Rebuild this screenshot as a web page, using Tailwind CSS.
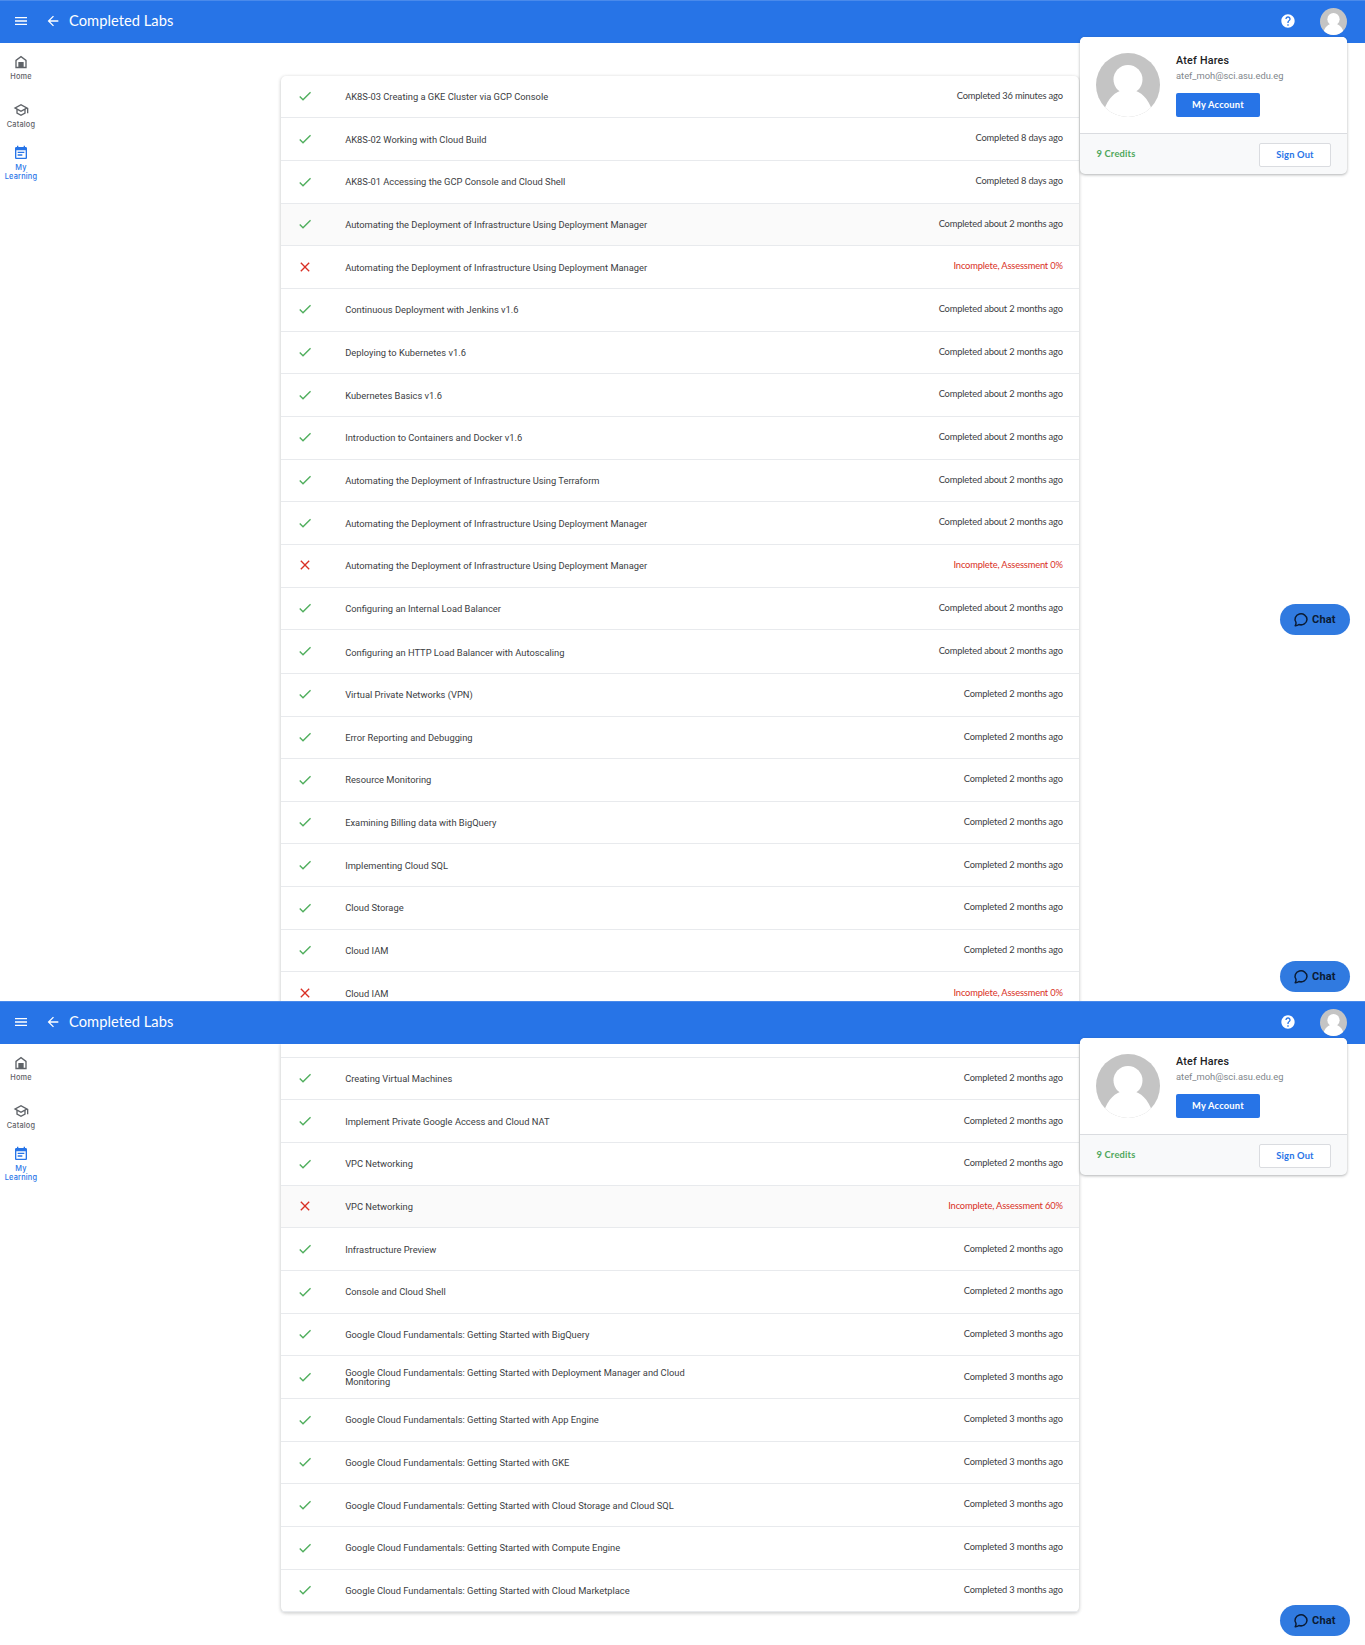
<!DOCTYPE html>
<html lang="en">
<head>
<meta charset="utf-8">
<title>Completed Labs</title>
<script src="https://cdn.jsdelivr.net/npm/@tailwindcss/browser@4"></script>
</head>
<body class="w-[1365px] bg-white font-['Roboto',sans-serif] text-[9.33px] text-[#3c4043]">
<svg class="hidden">
  <symbol id="menu" viewBox="0 0 24 24"><path d="M3 18h18v-2H3v2zm0-5h18v-2H3v2zm0-7v2h18V6H3z"/></symbol>
  <symbol id="back" viewBox="0 0 24 24"><path d="M20 11H7.83l5.59-5.59L12 4l-8 8 8 8 1.41-1.41L7.83 13H20v-2z"/></symbol>
  <symbol id="home" viewBox="0 0 24 24"><path fill-rule="evenodd" d="M12 2.6 3.5 9v12.2h17V9L12 2.6zm0 2.5 6.5 4.900v9.200H16V12H8v7.200H5.500V10L12 5.100z"/></symbol>
  <symbol id="school" viewBox="0 0 24 24"><path d="M12 3 1 9l4 2.180v6L12 21l7-3.820v-6l2-1.090V17h2V9L12 3zm6.820 6L12 12.720 5.180 9 12 5.280 18.820 9zM17 15.990l-5 2.730-5-2.730v-3.720L12 15l5-2.730v3.720z"/></symbol>
  <symbol id="event" viewBox="0 0 24 24"><path d="M19 3h-1V1h-2v2H8V1H6v2H5c-1.110 0-2 .9-2 2v14c0 1.100.9 2 2 2h14c1.100 0 2-.9 2-2V5c0-1.100-.9-2-2-2zm0 16H5V8h14v11zM17 10H7v2h10v-2zm-3 4H7v2h7v-2z"/></symbol>
  <symbol id="help" viewBox="0 0 24 24"><path d="M12 2C6.480 2 2 6.480 2 12s4.480 10 10 10 10-4.480 10-10S17.520 2 12 2zm1 17h-2v-2h2v2zm2.070-7.750-.9.920C13.450 12.900 13 13.500 13 15h-2v-.5c0-1.100.450-2.100 1.170-2.830l1.240-1.260c.370-.360.590-.860.590-1.410 0-1.100-.9-2-2-2s-2 .9-2 2H8c0-2.210 1.790-4 4-4s4 1.790 4 4c0 .880-.360 1.680-.930 2.250z"/></symbol>
  <symbol id="done" viewBox="0 0 24 24"><path d="M9 16.200 4.800 12l-1.400 1.400L9 19 21 7l-1.400-1.400L9 16.200z"/></symbol>
  <symbol id="close" viewBox="0 0 24 24"><path d="M19 6.410 17.590 5 12 10.590 6.410 5 5 6.410 10.590 12 5 17.590 6.410 19 12 13.410 17.590 19 19 17.590 13.410 12z"/></symbol>
  <symbol id="avatar" viewBox="0 0 64 64"><rect width="64" height="64" fill="#c4c4c4"/><circle cx="32" cy="26.500" r="14.500" fill="#fff"/><path fill="#fff" d="M6 64C10 48 16 41 25 37.500h14C48 41 54 48 58 64z"/></symbol>
  <symbol id="chat" viewBox="0 0 16 16"><path d="M3 10.400A6 5.500 0 1 1 5.900 12.500Q4.300 13.800 2.200 13.700 3.300 12.400 3 10.400z" fill="none" stroke="currentColor" stroke-width="1.500" stroke-linejoin="round"/></symbol>
</svg>

<div id="app"></div>

<script>
const ADM = 'Automating the Deployment of Infrastructure Using Deployment Manager';
const GCF = 'Google Cloud Fundamentals: Getting Started with ';
const AB = 'Completed about 2 months ago', M2 = 'Completed 2 months ago', M3 = 'Completed 3 months ago', IN = 'Incomplete, Assessment ';
const first = [
  ['AK8S-03 Creating a GKE Cluster via GCP Console', 'Completed 36 minutes ago'],
  ['AK8S-02 Working with Cloud Build', 'Completed 8 days ago'],
  ['AK8S-01 Accessing the GCP Console and Cloud Shell', 'Completed 8 days ago'],
  [ADM, AB, 'hover'], [ADM, IN + '0%'],
  ['Continuous Deployment with Jenkins v1.6', AB], ['Deploying to Kubernetes v1.6', AB],
  ['Kubernetes Basics v1.6', AB], ['Introduction to Containers and Docker v1.6', AB],
  ['Automating the Deployment of Infrastructure Using Terraform', AB],
  [ADM, AB], [ADM, IN + '0%'],
  ['Configuring an Internal Load Balancer', AB],
  ['Configuring an HTTP Load Balancer with Autoscaling', AB, 'tall'],
  ['Virtual Private Networks (VPN)', M2], ['Error Reporting and Debugging', M2],
  ['Resource Monitoring', M2], ['Examining Billing data with BigQuery', M2],
  ['Implementing Cloud SQL', M2], ['Cloud Storage', M2], ['Cloud IAM', M2], ['Cloud IAM', IN + '0%']
];
const second = [
  ['Creating Virtual Machines', M2], ['Implement Private Google Access and Cloud NAT', M2],
  ['VPC Networking', M2], ['VPC Networking', IN + '60%', 'hover'],
  ['Infrastructure Preview', M2], ['Console and Cloud Shell', M2],
  [GCF + 'BigQuery', M3], [GCF + 'Deployment Manager and Cloud Monitoring', M3],
  [GCF + 'App Engine', M3], [GCF + 'GKE', M3], [GCF + 'Cloud Storage and Cloud SQL', M3],
  [GCF + 'Compute Engine', M3], [GCF + 'Cloud Marketplace', M3]
];
const row = ([title, status, kind]) => {
  const bad = status.startsWith('Incomplete');
  return `<li class="flex shrink-0 items-center border-b border-[#e8eaed] pl-[16.500px] pr-[16.500px] ${kind === 'tall' ? 'h-[43.667px]' : 'h-[42.667px]'} ${kind === 'hover' ? 'bg-[#fafafa]' : ''}">
    <svg class="mb-[0.600px] size-4 shrink-0 ${bad ? 'fill-[#d93025]' : 'fill-[#4fae5c]'}"><use href="#${bad ? 'close' : 'done'}"/></svg>
    <span class="ml-8 w-[360px] leading-[9.330px] ${kind === 'tall' ? 'pt-[1.400px]' : 'pt-[0.300px]'}">${title}</span>
    <span class="ml-auto whitespace-nowrap pb-[1.400px] font-['Lato',sans-serif] leading-3 tracking-[-0.170px] ${bad ? 'text-[#d93025]' : ''}">${status}</span>
  </li>`;
};
const chat = pos => `<button class="absolute right-[15px] flex h-[31px] w-[70px] items-center gap-1 rounded-full bg-[#307ae0] pl-[13px] text-[11px] font-bold text-[#0b1b33] ${pos}"><svg class="size-4"><use href="#chat"/></svg><span class="-ml-px pt-px tracking-[0.200px]">Chat</span></button>`;
const screen = (rows, size, card, chats, cutRow = '') => `
<section class="relative overflow-hidden ${size}">
  <header class="relative z-10 flex h-[43px] items-center border-t border-[#4a8aeb] bg-[#2774e7] pb-0.5 pl-[13px] pr-[18px] text-white">
    <svg class="size-4 fill-current"><use href="#menu"/></svg>
    <svg class="ml-4 size-4 fill-current"><use href="#back"/></svg>
    <h1 class="ml-2 font-['Lato',sans-serif] text-[14.670px] leading-5 tracking-[0.050px]">Completed Labs</h1>
    <svg class="ml-auto size-4 fill-current"><use href="#help"/></svg>
    <svg class="ml-6 mt-px size-[27px] rounded-full"><use href="#avatar"/></svg>
  </header>
  <nav class="absolute left-0 top-[54px] flex w-[42px] flex-col items-center text-center font-['Inter',sans-serif] text-[7.330px] font-medium leading-[9px] tracking-[0.200px] text-[#5f6368]">
    <a class="flex h-12 flex-col items-center"><svg class="size-4 fill-current"><use href="#home"/></svg><span class="mt-[2px]">Home</span></a>
    <a class="flex h-[43px] flex-col items-center"><svg class="size-4 fill-current"><use href="#school"/></svg><span class="mt-[2px]">Catalog</span></a>
    <a class="flex flex-col items-center text-[#2774e7]"><svg class="size-4 fill-current"><use href="#event"/></svg><span class="mt-[2px]">My<br>Learning</span></a>
  </nav>
  <main class="pl-[280.670px]">
    <ul class="w-[798.670px] bg-white shadow-[0_1px_3px_1px_rgba(60,64,67,0.2)] ${card}">${cutRow}${rows.map(row).join('')}</ul>
  </main>
  <aside class="absolute left-[1080px] top-[37px] z-20 h-[137px] w-[267px] rounded-[5px] bg-[#f8f9fa] shadow-[0_1px_3px_rgba(60,64,67,0.4)]">
    <div class="flex h-[97px] rounded-t-[5px] border-b border-[#dadce0] bg-white pl-4 pt-4">
      <svg class="size-16 rounded-full"><use href="#avatar"/></svg>
      <div class="ml-4 flex flex-col items-start">
        <strong class="text-[10.670px] font-medium leading-[15px] tracking-[0.250px] text-[#202124]">Atef Hares</strong>
        <span class="mt-[2px] leading-3 text-[#80868b]">atef_moh@sci.asu.edu.eg</span>
        <button class="mt-[11px] h-6 w-[84px] rounded-[2px] bg-[#2774e7] font-['Lato',sans-serif] font-bold tracking-[0.200px] text-white">My Account</button>
      </div>
    </div>
    <div class="flex h-10 items-center justify-between pl-[16.500px] pr-4 font-['Lato',sans-serif] font-bold tracking-[0.180px]">
      <span class="text-[#4fa75b]">9 Credits</span>
      <button class="mt-px h-6 w-[72px] rounded-[2px] border border-[#dadce0] bg-white text-[#2774e7]">Sign Out</button>
    </div>
  </aside>
  ${chats}
</section>`;
document.getElementById('app').innerHTML =
  screen(first, 'h-[1001px]', 'mt-[32.670px] rounded-t-[5px]', chat('top-[604px]') + chat('top-[961px]')) +
  screen(second, 'h-[644px]', 'rounded-b-[5px]', chat('top-[604px]'), '<li class="h-[13.800px] border-b border-[#e8eaed]"></li>');
</script>
</body>
</html>
